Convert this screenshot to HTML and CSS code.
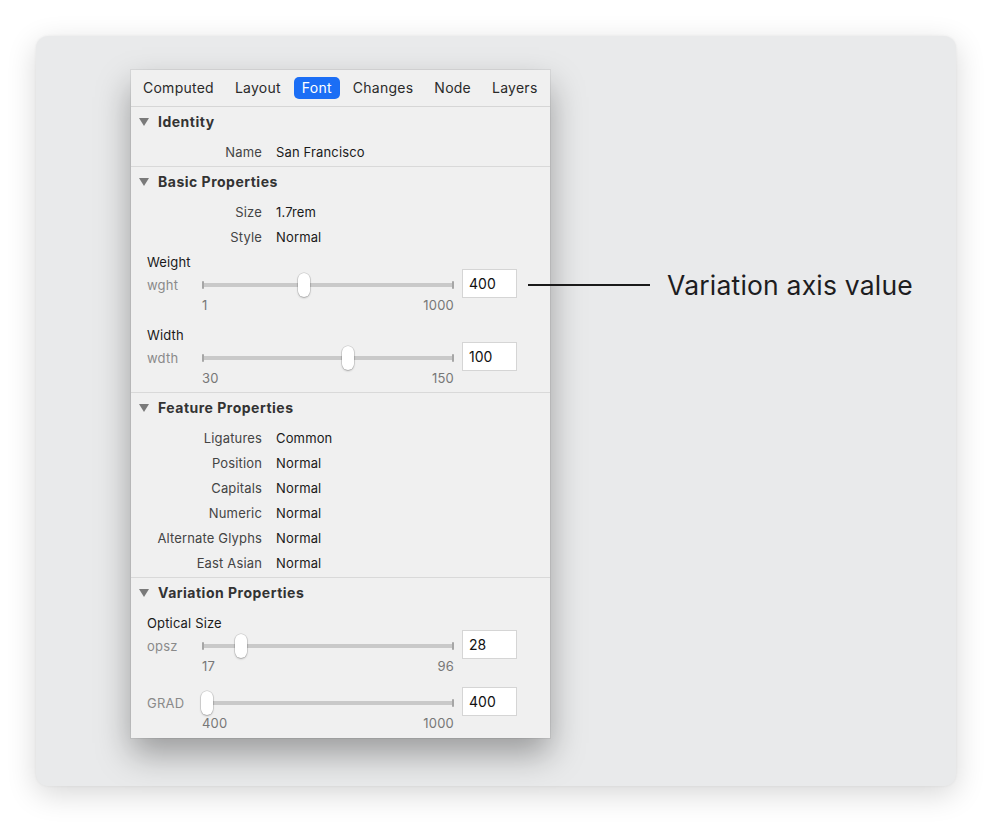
FILE: index.html
```html
<!DOCTYPE html>
<html>
<head>
<meta charset="utf-8">
<link rel="stylesheet" href="styles.css">
</head>
<body>
<div class="page">
  <div class="card">
    <div class="panel">
      <div class="tabs">
        <span class="tab">Computed</span>
        <span class="tab">Layout</span>
        <span class="tab active">Font</span>
        <span class="tab">Changes</span>
        <span class="tab">Node</span>
        <span class="tab">Layers</span>
      </div>

      <div class="section">
        <div class="sec-head"><span class="tri"></span>Identity</div>
        <div class="rows">
          <div class="kv"><span class="k">Name</span><span class="v">San Francisco</span></div>
        </div>
      </div>

      <div class="section basic">
        <div class="sec-head"><span class="tri"></span>Basic Properties</div>
        <div class="rows">
          <div class="kv"><span class="k">Size</span><span class="v">1.7rem</span></div>
          <div class="kv"><span class="k">Style</span><span class="v">Normal</span></div>
        </div>
        <div class="axis">
          <div class="axis-name">Weight</div>
          <div class="axis-row">
            <span class="tag">wght</span>
            <div class="slider"><span class="thumb" style="left: 94px"></span></div>
            <div class="val">400</div>
          </div>
          <div class="range"><span>1</span><span>1000</span></div>
        </div>
        <div class="axis second">
          <div class="axis-name">Width</div>
          <div class="axis-row">
            <span class="tag">wdth</span>
            <div class="slider"><span class="thumb" style="left: 138px"></span></div>
            <div class="val">100</div>
          </div>
          <div class="range"><span>30</span><span>150</span></div>
        </div>
      </div>

      <div class="section">
        <div class="sec-head"><span class="tri"></span>Feature Properties</div>
        <div class="rows">
          <div class="kv"><span class="k">Ligatures</span><span class="v">Common</span></div>
          <div class="kv"><span class="k">Position</span><span class="v">Normal</span></div>
          <div class="kv"><span class="k">Capitals</span><span class="v">Normal</span></div>
          <div class="kv"><span class="k">Numeric</span><span class="v">Normal</span></div>
          <div class="kv"><span class="k">Alternate Glyphs</span><span class="v">Normal</span></div>
          <div class="kv"><span class="k">East Asian</span><span class="v">Normal</span></div>
        </div>
      </div>

      <div class="section variation">
        <div class="sec-head"><span class="tri"></span>Variation Properties</div>
        <div class="axis optical">
          <div class="axis-name">Optical Size</div>
          <div class="axis-row">
            <span class="tag">opsz</span>
            <div class="slider"><span class="thumb" style="left: 31px"></span></div>
            <div class="val">28</div>
          </div>
          <div class="range"><span>17</span><span>96</span></div>
        </div>
        <div class="axis grad">
          <div class="axis-row">
            <span class="tag">GRAD</span>
            <div class="slider"><span class="thumb" style="left: -3px"></span></div>
            <div class="val">400</div>
          </div>
          <div class="range"><span>400</span><span>1000</span></div>
        </div>
      </div>
    </div>

    <div class="callout">
      <span class="line"></span>
      <span class="callout-text">Variation axis value</span>
    </div>
  </div>
</div>
</body>
</html>
```

FILE: styles.css
```css
* { box-sizing: border-box; }
html, body { margin: 0; padding: 0; background: #ffffff; }
body { font-family: Inter, "Noto Sans", "Liberation Sans", sans-serif; color: #1d1d1f; }

.page { width: 992px; height: 822px; padding: 36px; }

.card {
  position: relative;
  width: 920px;
  height: 750px;
  background: #e9eaeb;
  border-radius: 12px;
  box-shadow: 0 8px 30px rgba(0,0,0,0.16), 0 0 3px rgba(0,0,0,0.06);
  padding: 34px 0 0 95px;
}

.panel {
  width: 419px;
  background: #f0f0f0;
  box-shadow: 0 16px 32px rgba(0,0,0,0.34), 0 0 0 1px rgba(0,0,0,0.06);
}

.tabs {
  height: 37px;
  display: flex;
  align-items: center;
  gap: 5px;
  padding: 0 0 0 4px;
  border-bottom: 1px solid #d6d6d6;
}
.tab {
  font-size: 14px;
  line-height: 22px;
  height: 22px;
  padding: 0 8px;
  border-radius: 5px;
  color: #2a2a2a;
  letter-spacing: 0.25px;
}
.tab.active { background: #1b6ef5; color: #ffffff; }

.section { border-bottom: 1px solid #d9d9d9; padding-bottom: 2px; }
.section.basic { padding-bottom: 5px; }
.section.variation { border-bottom: none; padding-bottom: 6px; }

.sec-head {
  height: 29px;
  display: flex;
  align-items: center;
  padding-left: 8px;
  font-size: 14px;
  font-weight: 700;
  color: #333333;
  letter-spacing: 0.5px;
}
.tri {
  width: 0; height: 0;
  border-left: 5px solid transparent;
  border-right: 5px solid transparent;
  border-top: 8px solid #7a7a7a;
  margin-right: 9px;
}

.rows { padding-top: 3px; }
.kv { height: 25px; display: flex; align-items: center; font-size: 13px; letter-spacing: 0.15px; }
.k { width: 131px; text-align: right; color: #444444; }
.v { margin-left: 14px; color: #1a1a1a; }

.axis { padding-left: 16px; }
.axis.second { margin-top: 8px; }
.axis.optical { margin-top: 3px; }
.axis.grad { margin-top: 17px; }

.axis-name { height: 25px; display: flex; align-items: center; font-size: 13px; color: #1a1a1a; letter-spacing: 0.15px; }
.axis-row { height: 22px; display: flex; align-items: center; }
.tag { width: 55px; font-size: 13px; color: #8a8a8a; letter-spacing: 0.2px; }
.slider {
  position: relative;
  width: 252px;
  height: 22px;
  background: linear-gradient(#c9c9c9, #c9c9c9) no-repeat center / 100% 4px;
}
.slider::before,
.slider::after {
  content: "";
  position: absolute;
  top: 7px;
  width: 2px;
  height: 8px;
  border-radius: 1px;
  background: #a6a6a6;
}
.slider::before { left: 0; }
.slider::after { right: 0; }
.thumb {
  position: absolute;
  top: -1px;
  width: 12px;
  height: 24px;
  margin-left: 2px;
  border-radius: 6px;
  background: #ffffff;
  box-shadow: 0 0 0 0.5px rgba(0,0,0,0.18), 0 1px 2px rgba(0,0,0,0.25);
}
.val {
  margin-left: 8px;
  width: 55px;
  height: 29px;
  background: #ffffff;
  border: 1px solid #d5d5d5;
  font-size: 14px;
  color: #111111;
  display: flex;
  align-items: center;
  padding-left: 6px;
  margin-top: -3px;
}
.range {
  height: 18px;
  margin-left: 55px;
  width: 252px;
  display: flex;
  justify-content: space-between;
  align-items: center;
  font-size: 13px;
  color: #777777;
  letter-spacing: 0.2px;
}

.callout {
  position: absolute;
  left: 492px;
  top: 234px;
  height: 30px;
  display: flex;
  align-items: center;
}
.line { width: 122px; height: 1.5px; background: #1a1a1a; margin-right: 17px; }
.callout-text { font-size: 26.5px; color: #1d1d1f; letter-spacing: 0.2px; }
```
